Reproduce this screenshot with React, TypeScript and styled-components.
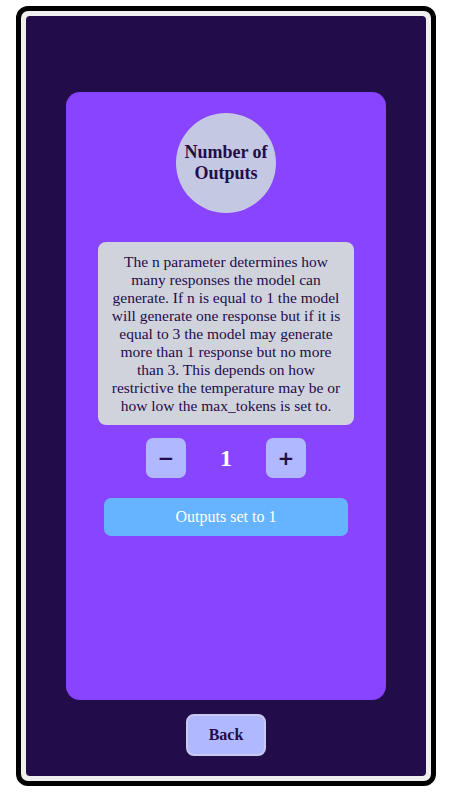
import { FC, useState } from "react";
import styled, { createGlobalStyle } from "styled-components";

const GlobalStyle = createGlobalStyle`
	body {
		margin: 0;
		background: #ffffff;
		font-family: "Liberation Serif", "Times New Roman", serif;
	}
`;

const Frame = styled.div`
	box-sizing: border-box;
	width: 420px;
	height: 780px;
	margin: 6px 0 0 16px;
	border: 5px solid #000000;
	border-radius: 12px;
	background-color: #f0f0f0;
	padding: 5px;
`;

const Screen = styled.div`
	height: 100%;
	box-sizing: border-box;
	background-color: #220c4a;
	border-radius: 4px;
	display: flex;
	flex-direction: column;
	align-items: center;
	padding-top: 76px;
`;

const Card = styled.div`
	box-sizing: border-box;
	width: 320px;
	height: 608px;
	background-color: #8844ff;
	border-radius: 14px;
	display: flex;
	flex-direction: column;
	align-items: center;
	padding-top: 21px;
`;

const Badge = styled.div`
	width: 100px;
	height: 100px;
	border-radius: 50%;
	background-color: #c5c8e3;
	display: flex;
	align-items: center;
	justify-content: center;
	text-align: center;
	font-weight: 700;
	font-size: 18px;
	line-height: 21px;
	color: #220c4a;
`;

const Description = styled.div`
	box-sizing: border-box;
	width: 256px;
	margin-top: 29px;
	padding: 11px 10px 10px;
	background-color: #d1d3dc;
	border-radius: 8px;
	text-align: center;
	font-size: 15.5px;
	line-height: 18px;
	color: #220c4a;
`;

const Counter = styled.div`
	display: flex;
	align-items: center;
	margin-top: 13px;
`;

const StepButton = styled.button`
	width: 40px;
	height: 40px;
	border: none;
	border-radius: 7px;
	background-color: #b0b8ff;
	color: #220c4a;
	font-family: "DejaVu Sans", sans-serif;
	font-weight: 700;
	font-size: 20px;
	padding: 0;
	display: flex;
	align-items: center;
	justify-content: center;
	cursor: pointer;
`;

const Count = styled.div`
	width: 80px;
	text-align: center;
	font-weight: 700;
	font-size: 24px;
	color: #ffffff;
`;

const StatusButton = styled.button`
	width: 244px;
	height: 38px;
	margin-top: 20px;
	border: none;
	border-radius: 7px;
	background-color: #66b3ff;
	color: #ffffff;
	font-family: "Liberation Serif", "Times New Roman", serif;
	font-size: 16px;
	cursor: pointer;
`;

const BackButton = styled.button`
	width: 80px;
	height: 42px;
	margin-top: 14px;
	border: 2px solid #c9c9ee;
	border-radius: 8px;
	background-color: #b0b8ff;
	color: #220c4a;
	font-family: "Liberation Serif", "Times New Roman", serif;
	font-weight: 700;
	font-size: 16px;
	cursor: pointer;
`;

const App: FC = () => {
	const [count, setCount] = useState(1);

	return (
		<>
			<GlobalStyle />
			<Frame>
				<Screen>
					<Card>
						<Badge>
							Number of
							<br />
							Outputs
						</Badge>
						<Description>
							The n parameter determines how many responses the model can generate. If n is equal to 1 the model
							will generate one response but if it is equal to 3 the model may generate more than 1 response but no
							more than 3. This depends on how restrictive the temperature may be or how low the max_tokens is set
							to.
						</Description>
						<Counter>
							<StepButton onClick={() => setCount((c) => Math.max(1, c - 1))}>−</StepButton>
							<Count>{count}</Count>
							<StepButton onClick={() => setCount((c) => Math.min(3, c + 1))}>+</StepButton>
						</Counter>
						<StatusButton>Outputs set to {count}</StatusButton>
					</Card>
					<BackButton>Back</BackButton>
				</Screen>
			</Frame>
		</>
	);
};

export default App;
